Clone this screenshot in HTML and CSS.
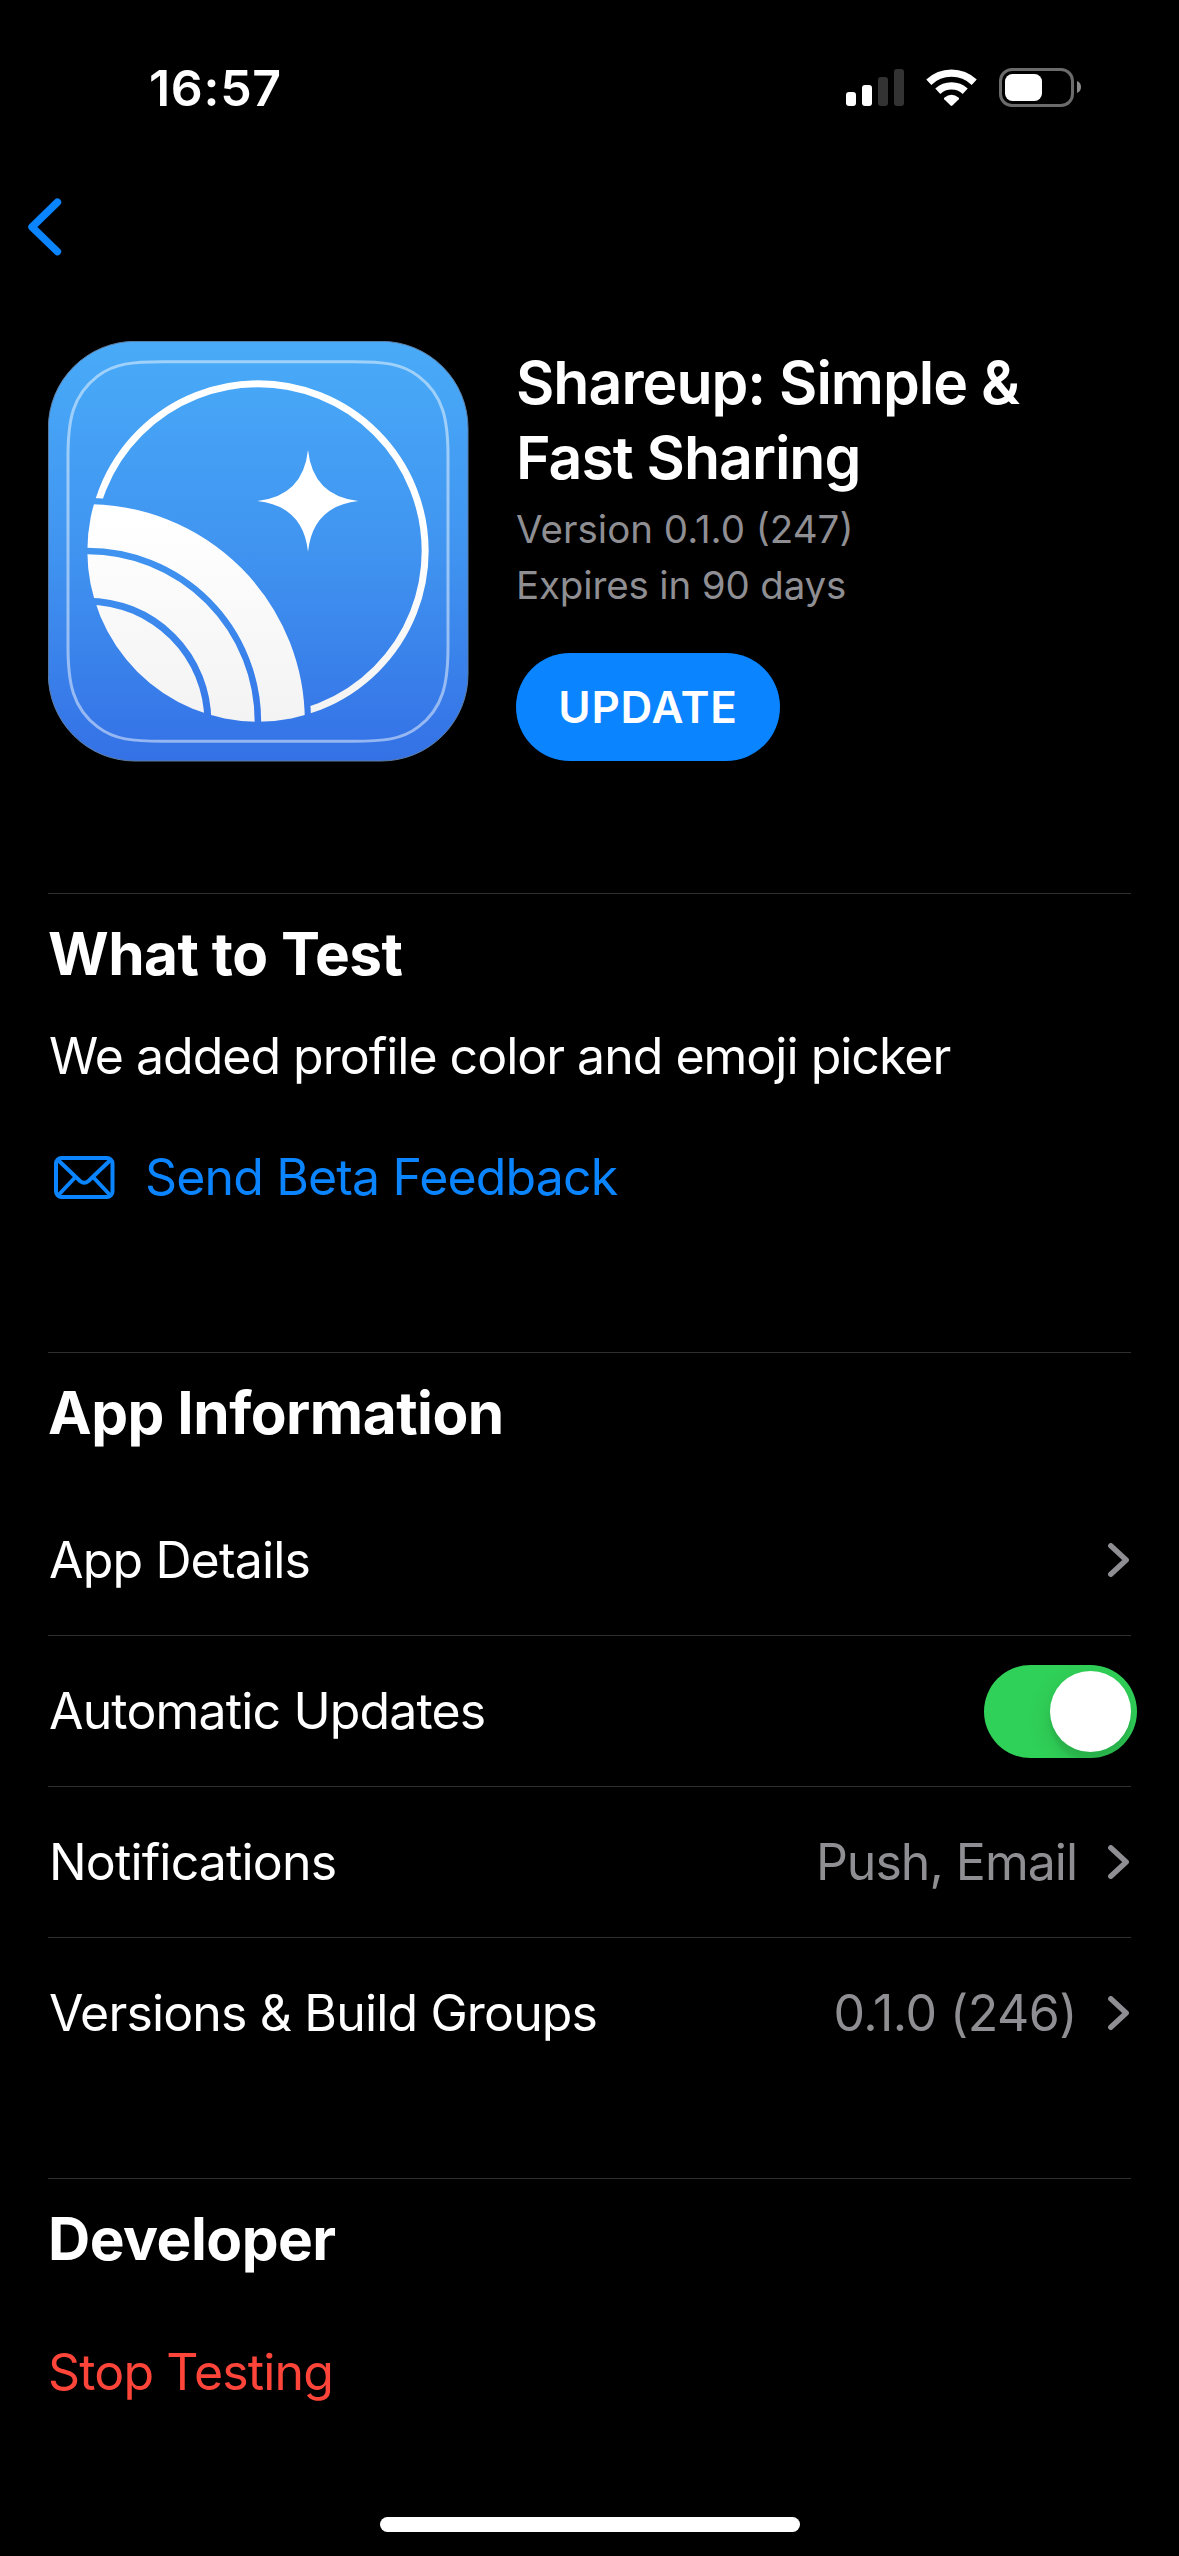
FILE: index.html
```
<!DOCTYPE html>
<html lang="en">
<head>
  <meta charset="UTF-8">
  <meta name="viewport" content="width=device-width, initial-scale=1.0">
  <title>Shareup: Simple &amp; Fast Sharing</title>
  <link rel="stylesheet" href="styles.css">
</head>
<body>
  <!-- Status bar -->
  <div class="status-bar">
    <span class="time">16:57</span>
    <svg class="status-icons" width="236" height="40" viewBox="846 68 236 40">
      <rect x="846" y="92" width="10" height="14" rx="3" fill="#fff"/>
      <rect x="862" y="85" width="10" height="21" rx="3" fill="#fff"/>
      <rect x="878" y="77" width="10" height="29" rx="3" fill="#333"/>
      <rect x="894" y="69" width="10" height="37" rx="3" fill="#333"/>
      <g fill="none" stroke="#fff" stroke-width="7.4">
        <path d="M928.8 82.2A33 33 0 0 1 974.2 82.2"/>
        <path d="M937.8 91.2A20.2 20.2 0 0 1 965.2 91.2"/>
      </g>
      <path d="M944.2 97.8Q951.5 91.6 958.8 97.8Q959.4 98.5 958.8 99.2L952.4 105.6Q951.5 106.4 950.6 105.6L944.2 99.2Q943.6 98.5 944.2 97.8Z" fill="#fff"/>
      <rect x="1000.5" y="69.5" width="72" height="36" rx="11.5" fill="none" stroke="#6b6b6b" stroke-width="3"/>
      <rect x="1005" y="74" width="37" height="27" rx="7.5" fill="#fff"/>
      <path d="M1077 81Q1081 82.5 1081 87T1077 93Z" fill="#8a8a8a"/>
    </svg>
  </div>

  <!-- Navigation -->
  <div class="nav-bar">
    <svg class="back" width="34" height="58" viewBox="0 0 34 58">
      <path d="M29.4 4.2L4 29L29.4 53.6"/>
    </svg>
  </div>

  <main class="content">
    <!-- App header -->
    <div class="app-header">
      <svg class="app-icon" width="421" height="421" viewBox="54 63 1263 1263">
        <defs>
          <linearGradient id="sky" x1="0" y1="0" x2="0" y2="1">
            <stop offset="0" stop-color="#49abf8"/>
            <stop offset="0.5" stop-color="#4094f0"/>
            <stop offset="1" stop-color="#3471e6"/>
          </linearGradient>
          <linearGradient id="snow" gradientUnits="userSpaceOnUse" x1="0" y1="600" x2="0" y2="1200">
            <stop offset="0" stop-color="#fff"/>
            <stop offset="1" stop-color="#f3f3f4"/>
          </linearGradient>
          <clipPath id="disc"><circle cx="684" cy="693" r="512"/></clipPath>
          <mask id="ringMask">
            <rect x="53" y="62" width="1262" height="1262" fill="#fff"/>
            <circle cx="172" cy="1205" r="671" fill="#000"/>
          </mask>
        </defs>
        <rect x="55" y="64" width="1259" height="1259" rx="260" fill="url(#sky)" stroke="#5d7ea6" stroke-width="3"/>
        <path class="icon-frame" d="M400 125H968C1060 125 1116 130 1166 169C1240 226 1254 300 1254 409V980C1254 1089 1240 1163 1166 1220C1116 1259 1060 1264 968 1264H400C308 1264 252 1259 202 1220C128 1163 114 1089 114 980V409C114 300 128 226 202 169C252 130 308 125 400 125Z"/>
        <circle cx="684" cy="693" r="501.5" fill="none" stroke="url(#snow)" stroke-width="21" mask="url(#ringMask)"/>
        <g clip-path="url(#disc)" fill="none" stroke="url(#snow)">
          <circle cx="172" cy="1205" r="587" stroke-width="131"/>
          <circle cx="172" cy="1205" r="437" stroke-width="130"/>
          <circle cx="172" cy="1205" r="351" fill="url(#snow)" stroke="none"/>
        </g>
        <path d="M834 390Q849 528 985 543Q849 558 834 695Q819 558 682 543Q819 528 834 390Z" fill="#fff"/>
      </svg>
      <div class="app-summary">
        <h1>Shareup: Simple &amp;<br>Fast Sharing</h1>
        <p class="version">Version 0.1.0 (247)</p>
        <p class="expires">Expires in 90 days</p>
        <button class="update-btn">UPDATE</button>
      </div>
    </div>

    <!-- What to test -->
    <section class="section test-section">
      <h2>What to Test</h2>
      <p class="notes">We added profile color and emoji picker</p>
      <div class="feedback">
        <svg width="61" height="43" viewBox="0 0 61 43">
          <rect x="2" y="2" width="56.5" height="39" rx="5.5"/>
          <path d="M4 4L26 25Q30.3 28.5 34.5 25L56.5 4M4 39.5L21.5 21M56.5 39.5L39 21"/>
        </svg>
        <span>Send Beta Feedback</span>
      </div>
    </section>

    <!-- App information -->
    <section class="section info-section">
      <h2>App Information</h2>
      <div class="row">
        <span class="label">App Details</span>
        <svg class="chevron" width="21" height="34" viewBox="0 0 21 34"><path d="M2.8 2.8L18.2 17L2.8 31.2"/></svg>
      </div>
      <div class="row">
        <span class="label">Automatic Updates</span>
        <div class="toggle"><div class="knob"></div></div>
      </div>
      <div class="row">
        <span class="label">Notifications</span>
        <span class="value">Push, Email</span>
        <svg class="chevron" width="21" height="34" viewBox="0 0 21 34"><path d="M2.8 2.8L18.2 17L2.8 31.2"/></svg>
      </div>
      <div class="row">
        <span class="label">Versions &amp; Build Groups</span>
        <span class="value build">0.1.0 (246)</span>
        <svg class="chevron" width="21" height="34" viewBox="0 0 21 34"><path d="M2.8 2.8L18.2 17L2.8 31.2"/></svg>
      </div>
    </section>

    <!-- Developer -->
    <section class="section">
      <h2>Developer</h2>
      <p class="stop">Stop Testing</p>
    </section>
  </main>

  <div class="home-indicator"></div>
</body>
</html>
```
FILE: styles.css
```
* {
  box-sizing: border-box;
  margin: 0;
  padding: 0;
}

body {
  width: 1179px;
  height: 2556px;
  overflow: hidden;
  background-color: #000;
  color: #fff;
  font-family: Inter, "Liberation Sans", sans-serif;
  font-size: 50px;
  line-height: 60px;
  letter-spacing: -0.85px;
  white-space: nowrap;
  display: flex;
  flex-direction: column;
}

svg {
  display: block;
  flex: none;
}

/* Status bar */
.status-bar {
  height: 177px;
  padding: 58px 97px 0 149px;
  display: flex;
  justify-content: space-between;
  align-items: flex-start;
}

.time {
  font-weight: 600;
  letter-spacing: 0.7px;
}

.status-icons {
  margin-top: 10px;
}

/* Navigation bar */
.nav-bar {
  height: 164px;
  padding: 21px 28px;
}

.back path {
  fill: none;
  stroke: #0a84ff;
  stroke-width: 7.5;
  stroke-linecap: round;
  stroke-linejoin: round;
}

.content {
  padding: 0 48px;
}

/* App header */
.app-header {
  height: 552px;
  display: flex;
  gap: 47px;
}

.icon-frame {
  fill: none;
  stroke: #fff;
  stroke-opacity: 0.48;
  stroke-width: 9;
}

.app-summary {
  padding-top: 4px;
}

h1 {
  margin-bottom: 6px;
  font-size: 59px;
  font-weight: 600;
  line-height: 75px;
  letter-spacing: -1px;
}

.version,
.expires {
  font-size: 38.5px;
  line-height: 56px;
  letter-spacing: 0;
  color: #8e8e93;
}

.expires {
  letter-spacing: -0.15px;
}

.update-btn {
  margin-top: 40px;
  width: 264px;
  height: 108px;
  border: none;
  border-radius: 54px;
  background-color: #0a84ff;
  color: #fff;
  font-family: inherit;
  font-size: 44px;
  font-weight: 600;
  letter-spacing: 0.8px;
}

/* Sections */
.section {
  border-top: 1px solid #2f2f31;
  padding-top: 24px;
}

.test-section {
  height: 459px;
}

.info-section {
  height: 826px;
}

h2 {
  font-size: 58.5px;
  font-weight: 700;
  line-height: 72px;
  letter-spacing: -0.5px;
}

.notes {
  margin-top: 36px;
  padding-left: 1px;
  letter-spacing: -1px;
}

.feedback {
  display: flex;
  align-items: center;
  gap: 30px;
  margin-top: 61px;
  padding-left: 6px;
  color: #0a84ff;
}

.feedback svg {
  fill: none;
  stroke: #0a84ff;
  stroke-width: 4;
}

/* Rows */
.row {
  height: 151px;
  display: flex;
  align-items: center;
  border-bottom: 1px solid #2f2f31;
}

h2 + .row {
  margin-top: 36px;
}

.row:last-child {
  border-bottom: none;
  padding-bottom: 2px;
}

.label {
  flex: 1;
  padding-left: 1px;
}

.value {
  color: #8e8e93;
  letter-spacing: -1px;
}

.value.build {
  letter-spacing: -0.5px;
}

.chevron {
  margin: 0 2px 0 31px;
  fill: none;
  stroke: #8e8e93;
  stroke-width: 5.4;
  stroke-linecap: round;
  stroke-linejoin: round;
}

.toggle {
  width: 153px;
  height: 93px;
  margin-right: -6px;
  padding: 6px;
  border-radius: 47px;
  background-color: #30d158;
  overflow: hidden;
  display: flex;
  justify-content: flex-end;
}

.knob {
  width: 81px;
  height: 81px;
  border-radius: 50%;
  background-color: #fff;
  box-shadow: 0 9px 24px rgba(0, 0, 0, 0.15), 0 9px 3px rgba(0, 0, 0, 0.06);
}

.stop {
  margin-top: 67px;
  color: #ff453a;
}

/* Home indicator */
.home-indicator {
  width: 420px;
  height: 15px;
  margin: auto auto 24px 380px;
  border-radius: 8px;
  background-color: #fff;
}
```
